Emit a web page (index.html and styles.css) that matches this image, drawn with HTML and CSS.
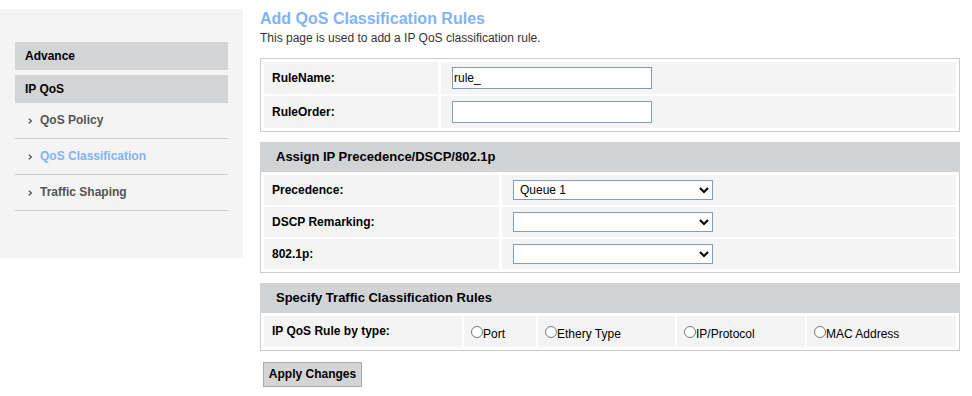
FILE: index.html
```html
<!DOCTYPE html>
<html>
<head>
<meta charset="utf-8">
<title>Add QoS Classification Rules</title>
<link rel="stylesheet" href="styles.css">
</head>
<body>
<div class="page">
  <aside class="sidebar">
    <div class="menu-head">Advance</div>
    <div class="menu-head">IP QoS</div>
    <ul class="menu">
      <li><svg class="arrow" width="5" height="6" viewBox="0 0 5 6"><polyline points="0.8,0.8 3.4,3 0.8,5.2" fill="none" stroke="#555" stroke-width="1.3"/></svg>QoS Policy</li>
      <li class="active"><svg class="arrow" width="5" height="6" viewBox="0 0 5 6"><polyline points="0.8,0.8 3.4,3 0.8,5.2" fill="none" stroke="#555" stroke-width="1.3"/></svg>QoS Classification</li>
      <li><svg class="arrow" width="5" height="6" viewBox="0 0 5 6"><polyline points="0.8,0.8 3.4,3 0.8,5.2" fill="none" stroke="#555" stroke-width="1.3"/></svg>Traffic Shaping</li>
    </ul>
  </aside>
  <main class="content">
    <h1 class="title">Add QoS Classification Rules</h1>
    <p class="intro">This page is used to add a IP QoS classification rule.</p>

    <div class="box grid-name">
      <div class="cell label">RuleName:</div>
      <div class="cell value"><input class="text" type="text" value="rule_"></div>
      <div class="cell label">RuleOrder:</div>
      <div class="cell value"><input class="text" type="text" value=""></div>
    </div>

    <section class="sect">
      <div class="sect-head">Assign IP Precedence/DSCP/802.1p</div>
      <div class="box body grid-assign">
        <div class="cell label">Precedence:</div>
        <div class="cell value"><select class="sel"><option>Queue 1</option></select></div>
        <div class="cell label">DSCP Remarking:</div>
        <div class="cell value"><select class="sel"><option></option></select></div>
        <div class="cell label">802.1p:</div>
        <div class="cell value"><select class="sel"><option></option></select></div>
      </div>
    </section>

    <section class="sect">
      <div class="sect-head">Specify Traffic Classification Rules</div>
      <div class="box body grid-type">
        <div class="cell label">IP QoS Rule by type:</div>
        <label class="cell opt"><input class="radio" type="radio" name="t">Port</label>
        <label class="cell opt"><input class="radio" type="radio" name="t">Ethery Type</label>
        <label class="cell opt"><input class="radio" type="radio" name="t">IP/Protocol</label>
        <label class="cell opt"><input class="radio" type="radio" name="t">MAC Address</label>
      </div>
    </section>

    <button class="apply" type="button">Apply Changes</button>
  </main>
</div>
</body>
</html>
```
FILE: styles.css
```css
body {
  margin: 0;
  background: #ffffff;
  font-family: "Liberation Sans", Arial, sans-serif;
  font-size: 12px;
  color: #000;
}

.page {
  display: flex;
  align-items: flex-start;
  padding-top: 9px;
}

.sidebar {
  width: 243px;
  height: 249px;
  box-sizing: border-box;
  background: #f4f4f4;
  padding: 33px 15px 0;
}

.menu-head {
  height: 28px;
  line-height: 28px;
  background: #d3d4d6;
  padding-left: 10px;
  font-weight: bold;
  color: #000;
}

.menu-head + .menu-head {
  margin-top: 5px;
}

.menu {
  list-style: none;
  margin: 0;
  padding: 0;
}

.menu li {
  box-sizing: border-box;
  border-bottom: 1px solid #cccccc;
  padding: 0 0 1px 13px;
  height: 36px;
  display: flex;
  align-items: center;
  font-weight: bold;
  color: #555555;
}

.menu li.active {
  color: #80b3f7;
}

.arrow {
  margin-right: 7px;
  margin-top: 2px;
}

.content {
  margin-left: 17px;
  width: 700px;
}

.title {
  margin: 0;
  font-size: 16px;
  line-height: 20px;
  font-weight: bold;
  color: #80b3f7;
}

.intro {
  margin: 2px 0 13px;
  line-height: 14px;
  color: #333333;
}

.box {
  border: 1px solid #cccccc;
  padding: 3px;
  display: grid;
  gap: 2px 3px;
}

.cell {
  background: #f4f4f4;
  display: flex;
  align-items: center;
}

.label {
  padding: 0 0 1px 8px;
  box-sizing: border-box;
  font-weight: bold;
}

.value {
  padding-left: 11px;
}

.grid-name {
  grid-template-columns: 174px 1fr;
  grid-auto-rows: 32px;
}

.text {
  width: 200px;
  height: 22px;
  box-sizing: border-box;
  border: 1px solid #7f9db9;
  padding: 0 1px;
  margin: 0;
  font-family: "Liberation Sans", Arial, sans-serif;
  font-size: 12px;
  color: #000;
  outline: none;
}

.sect {
  margin-top: 10px;
}

.sect-head {
  height: 30px;
  box-sizing: border-box;
  background: #d2d3d5;
  padding: 0 0 1px 16px;
  display: flex;
  align-items: center;
  font-size: 13px;
  font-weight: bold;
}

.body {
  border-top: none;
}

.grid-assign {
  grid-template-columns: 235px 1fr;
  grid-auto-rows: 30px;
}

.sel {
  width: 200px;
  height: 20px;
  box-sizing: border-box;
  border: 1px solid #7f9db9;
  border-radius: 0;
  background: #fff;
  margin: 0;
  padding: 0 2px;
  font-family: "Liberation Sans", Arial, sans-serif;
  font-size: 12px;
  color: #000;
}

.grid-type {
  grid-template-columns: 198px 72px 137px 128px 1fr;
  grid-auto-rows: 31px;
  gap: 2px;
}

.opt {
  padding-left: 2px;
  align-items: baseline;
  padding-top: 7px;
  box-sizing: border-box;
}

.radio {
  width: 12px;
  height: 12px;
  margin: 3px 0 0 5px;
}

.apply {
  display: block;
  margin: 11px 0 0 3px;
  width: 99px;
  height: 25px;
  padding: 0 0 2px;
  background: #d4d4d4;
  border: 1px solid #aaaaaa;
  font-family: "Liberation Sans", Arial, sans-serif;
  font-size: 12px;
  font-weight: bold;
  color: #000;
}
```
